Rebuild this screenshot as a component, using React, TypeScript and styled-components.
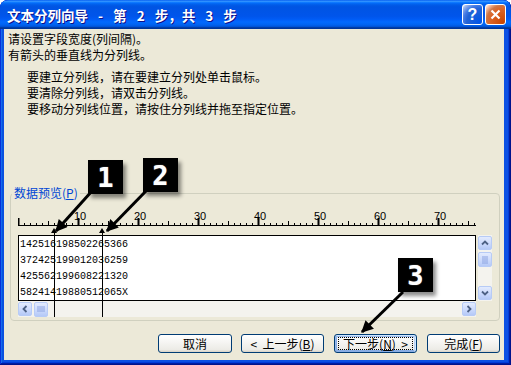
import styled, { createGlobalStyle, css } from 'styled-components';

const GlobalStyle = createGlobalStyle`
  html, body {
    margin: 0;
    padding: 0;
    background: #fff;
  }
  body {
    font-family: "Noto Sans CJK SC", "Liberation Sans", sans-serif;
    font-size: 12px;
    color: #000;
  }
  * {
    box-sizing: border-box;
  }
`;

const Window = styled.div`
  position: relative;
  width: 511px;
  height: 365px;
  display: flex;
  flex-direction: column;
  background: #0b50e3;
  border-radius: 8px 8px 0 0;
  box-shadow: inset -1px -1px #00138c, inset 1px 1px #0831d9, inset -2px -2px #001ea0,
    inset 2px 2px #166aee, inset -3px -3px #003bda, inset 3px 3px #0855dd;
  overflow: hidden;
`;

const TitleBar = styled.div`
  flex: none;
  height: 29px;
  display: flex;
  align-items: center;
  gap: 2px;
  padding: 0 5px 0 7px;
  border-radius: 8px 8px 0 0;
  background: linear-gradient(180deg, #0058ee 0%, #3593ff 4%, #288eff 6%, #127dff 8%, #036ffc 10%,
    #0262ee 14%, #0057e5 20%, #0054e3 24%, #0055eb 56%, #005bf5 66%, #026afe 76%, #0062ef 86%,
    #0052d6 92%, #0040ab 94%, #003092 100%);
`;

const TitleText = styled.div`
  flex: 1;
  color: #fff;
  font-weight: bold;
  font-size: 13.5px;
  line-height: 16px;
  word-spacing: 7px;
  text-shadow: 1px 1px #0f1089;
  white-space: pre;
`;

const TitleButton = styled.div<{ $kind: 'help' | 'close' }>`
  width: 21px;
  height: 21px;
  border: 1px solid #fff;
  border-radius: 3px;
  display: flex;
  align-items: center;
  justify-content: center;
  color: #fff;
  font: bold 16px "Liberation Sans", sans-serif;
  ${p =>
    p.$kind === 'help'
      ? css`
          background: radial-gradient(circle at 90% 90%, #0054e9 0%, #2263d5 55%, #4479e4 70%, #a3bbec 90%, #fff 100%);
        `
      : css`
          background: radial-gradient(circle at 90% 90%, #cc4600 0%, #dc6527 55%, #cd7546 70%, #ffccb2 90%, #fff 100%);
        `}
`;

const Body = styled.div`
  flex: 1;
  margin: 0 7px 5px 4px;
  padding: 2px 4px 0;
  background: #ece9d8;
  display: flex;
  flex-direction: column;
`;

const Intro = styled.p`
  margin: 0;
  line-height: 16px;
`;

const Hints = styled.p`
  margin: 6px 0 0 19px;
  line-height: 16px;
`;

const GroupBox = styled.fieldset`
  margin: 68px 0 0 2px;
  padding: 0;
  min-width: 0;
  border: 1px solid #d0d0bf;
  border-radius: 4px;
`;

const GroupLabel = styled.legend`
  margin-left: 1px;
  padding: 0 2px;
  color: #0046d5;
  font-size: 12px;
  line-height: 16px;
`;

const PreviewArea = styled.div`
  position: relative;
  padding: 8px 7px 3px;
`;

const RulerSvg = styled.svg`
  display: block;
  margin-bottom: 6px;
`;

const PreviewGrid = styled.div`
  display: grid;
  grid-template-columns: 458px 14px;
  grid-template-rows: 66px 16px;
  column-gap: 2px;
`;

const DataBox = styled.div`
  border: 1px solid #000;
  background: #fff;
  overflow: hidden;
  padding: 1px 0 0 1px;
  font-family: "Liberation Mono", monospace;
  font-size: 10px;
  line-height: 16px;
  white-space: pre;
`;

const VScroll = styled.div`
  display: flex;
  flex-direction: column;
  gap: 2px;
  padding: 1px 0;
  background: #f4f3ee;
`;

const HScroll = styled.div`
  display: flex;
  align-items: center;
  gap: 2px;
  background: #f4f3ee;
`;

const ScrollPart = styled.div<{ $thumb?: boolean }>`
  flex: none;
  width: 14px;
  height: 14px;
  border: 1px solid #b7cbf6;
  border-radius: 2px;
  background: linear-gradient(180deg, #e3ebfe 0%, #c9d8fc 60%, #b5c9f7 100%);
  display: flex;
  align-items: center;
  justify-content: center;
  ${p =>
    p.$thumb &&
    css`
      height: 15px;
    `}
`;

const Spacer = styled.div`
  flex: 1;
`;

const BreakLine = styled.div<{ $col: number }>`
  position: absolute;
  top: 27px;
  bottom: 3px;
  left: ${p => 7 + p.$col * 6 - 3}px;
  width: 7px;

  &::before {
    content: '';
    position: absolute;
    top: 0;
    left: 0;
    border-left: 3px solid transparent;
    border-right: 3px solid transparent;
    border-bottom: 5px solid #000;
  }

  &::after {
    content: '';
    position: absolute;
    top: 4px;
    bottom: 0;
    left: 3px;
    width: 1px;
    background: #000;
  }
`;

const ButtonRow = styled.div`
  display: flex;
  justify-content: flex-end;
  align-items: center;
  margin-top: 13px;
`;

const Button = styled.div<{ $w: number; $gap?: number; $focused?: boolean }>`
  position: relative;
  width: ${p => p.$w}px;
  height: 19px;
  margin-left: ${p => p.$gap ?? 0}px;
  border: 1px solid #003c74;
  border-radius: 3px;
  background: linear-gradient(180deg, #fff 0%, #ecebe6 86%, #d6d0c5 100%);
  display: flex;
  align-items: center;
  justify-content: center;
  font-size: 12px;
  line-height: 14px;
  white-space: pre;
  ${p =>
    p.$focused &&
    css`
      box-shadow: inset -1px 1px #cee7ff, inset 1px 2px #98b8ea, inset -2px 2px #bcd4f6,
        inset 1px -1px #89ade4, inset 2px -2px #89ade4;

      &::after {
        content: '';
        position: absolute;
        inset: 2px 3px;
        border: 1px dotted #000;
      }
    `}
`;

const Overlay = styled.svg`
  position: absolute;
  inset: 0;
  pointer-events: none;
`;

const Badge = styled.div<{ $x: number; $y: number }>`
  position: absolute;
  left: ${p => p.$x}px;
  top: ${p => p.$y}px;
  width: 35px;
  height: 34px;
  background: #000;
  box-shadow: 3px 4px 4px rgba(0, 0, 0, 0.45);
  display: flex;
  align-items: center;
  justify-content: center;
  color: #fff;
  font: bold 27px "DejaVu Sans Mono", monospace;
  line-height: 1;
  text-shadow: 0 0 1px #bbb;
`;

const rows = ['142516198502265366', '372425199012036259', '425562199608221320', '58241419880512065X'];

const Chevron = ({ dir }: { dir: 'up' | 'down' | 'left' | 'right' }) => {
  const rot = { up: 0, right: 90, down: 180, left: 270 }[dir];
  return (
    <svg width="8" height="8" viewBox="0 0 8 8" style={{ transform: `rotate(${rot}deg)` }}>
      <path d="M1 5.5 L4 2.5 L7 5.5" fill="none" stroke="#4d6185" strokeWidth={1.8} />
    </svg>
  );
};

const Grip = ({ vertical }: { vertical?: boolean }) => (
  <svg width="8" height="8" viewBox="0 0 8 8" style={{ transform: vertical ? 'none' : 'rotate(90deg)' }}>
    {[1, 3, 5, 7].map(y => (
      <line key={y} x1="1" x2="7" y1={y} y2={y} stroke="#8ca3e0" strokeWidth={1} />
    ))}
  </svg>
);

const Ruler = () => {
  const ticks = Array.from({ length: 77 }, (_, i) => i);
  return (
    <RulerSvg width="458" height="20">
      <line x1="0" x2="458" y1="16.5" y2="16.5" stroke="#000" />
      {ticks.map(i => {
        const h = i % 10 === 0 ? 7 : i % 5 === 0 ? 4 : 2;
        return (
          <line
            key={i}
            x1={i * 6 + 0.5}
            x2={i * 6 + 0.5}
            y1={16 - h}
            y2={17}
            stroke="#000"
            strokeWidth={i % 10 === 0 ? 2 : 1}
          />
        );
      })}
      {[10, 20, 30, 40, 50, 60, 70].map(n => (
        <text
          key={n}
          x={n * 6 + 2}
          y="11"
          textAnchor="middle"
          fontFamily="Liberation Sans, sans-serif"
          fontSize="11"
          fill="#000"
        >
          {n}
        </text>
      ))}
    </RulerSvg>
  );
};

const App = () => {
  return (
    <>
      <GlobalStyle />
      <Window>
        <TitleBar>
          <TitleText>文本分列向导 - 第 2 步，共 3 步</TitleText>
          <TitleButton $kind="help">?</TitleButton>
          <TitleButton $kind="close">
            <svg width="11" height="11" viewBox="0 0 11 11">
              <path d="M1.5 1.5 L9.5 9.5 M9.5 1.5 L1.5 9.5" stroke="#fff" strokeWidth={2.2} />
            </svg>
          </TitleButton>
        </TitleBar>

        <Body>
          <Intro>
            请设置字段宽度(列间隔)。
            <br />
            有箭头的垂直线为分列线。
          </Intro>
          <Hints>
            要建立分列线，请在要建立分列处单击鼠标。
            <br />
            要清除分列线，请双击分列线。
            <br />
            要移动分列线位置，请按住分列线并拖至指定位置。
          </Hints>

          <GroupBox>
            <GroupLabel>
              数据预览(<u>P</u>)
            </GroupLabel>
            <PreviewArea>
              <Ruler />
              <PreviewGrid>
                <DataBox>{rows.join('\n')}</DataBox>
                <VScroll>
                  <ScrollPart>
                    <Chevron dir="up" />
                  </ScrollPart>
                  <ScrollPart $thumb>
                    <Grip vertical />
                  </ScrollPart>
                  <Spacer />
                  <ScrollPart>
                    <Chevron dir="down" />
                  </ScrollPart>
                </VScroll>
                <HScroll>
                  <ScrollPart>
                    <Chevron dir="left" />
                  </ScrollPart>
                  <ScrollPart $thumb>
                    <Grip />
                  </ScrollPart>
                  <Spacer />
                  <ScrollPart>
                    <Chevron dir="right" />
                  </ScrollPart>
                </HScroll>
              </PreviewGrid>
              <BreakLine $col={6} />
              <BreakLine $col={14} />
            </PreviewArea>
          </GroupBox>

          <ButtonRow>
            <Button $w={74}>取消</Button>
            <Button $w={83} $gap={9}>
              {'<  上一步('}
              <u>B</u>
              {')'}
            </Button>
            <Button $w={83} $gap={10} $focused>
              下一步(<u>N</u>)&nbsp;&nbsp;&gt;
            </Button>
            <Button $w={73} $gap={10}>
              完成(<u>F</u>)
            </Button>
          </ButtonRow>
        </Body>

        <Overlay width="511" height="365">
          <defs>
            <marker
              id="head"
              viewBox="0 0 10 10"
              refX="9"
              refY="5"
              markerWidth="14"
              markerHeight="12"
              markerUnits="userSpaceOnUse"
              orient="auto"
            >
              <path d="M0 0 L10 5 L0 10 z" fill="#000" />
            </marker>
          </defs>
          <line x1="92" y1="191" x2="56" y2="231" stroke="#000" strokeWidth={3} markerEnd="url(#head)" />
          <line x1="147" y1="190" x2="107" y2="231" stroke="#000" strokeWidth={3} markerEnd="url(#head)" />
          <line x1="403" y1="292" x2="362" y2="332" stroke="#000" strokeWidth={3} markerEnd="url(#head)" />
        </Overlay>
        <Badge $x={88} $y={160}>1</Badge>
        <Badge $x={143} $y={158}>2</Badge>
        <Badge $x={398} $y={258}>3</Badge>
      </Window>
    </>
  );
};

export default App;
